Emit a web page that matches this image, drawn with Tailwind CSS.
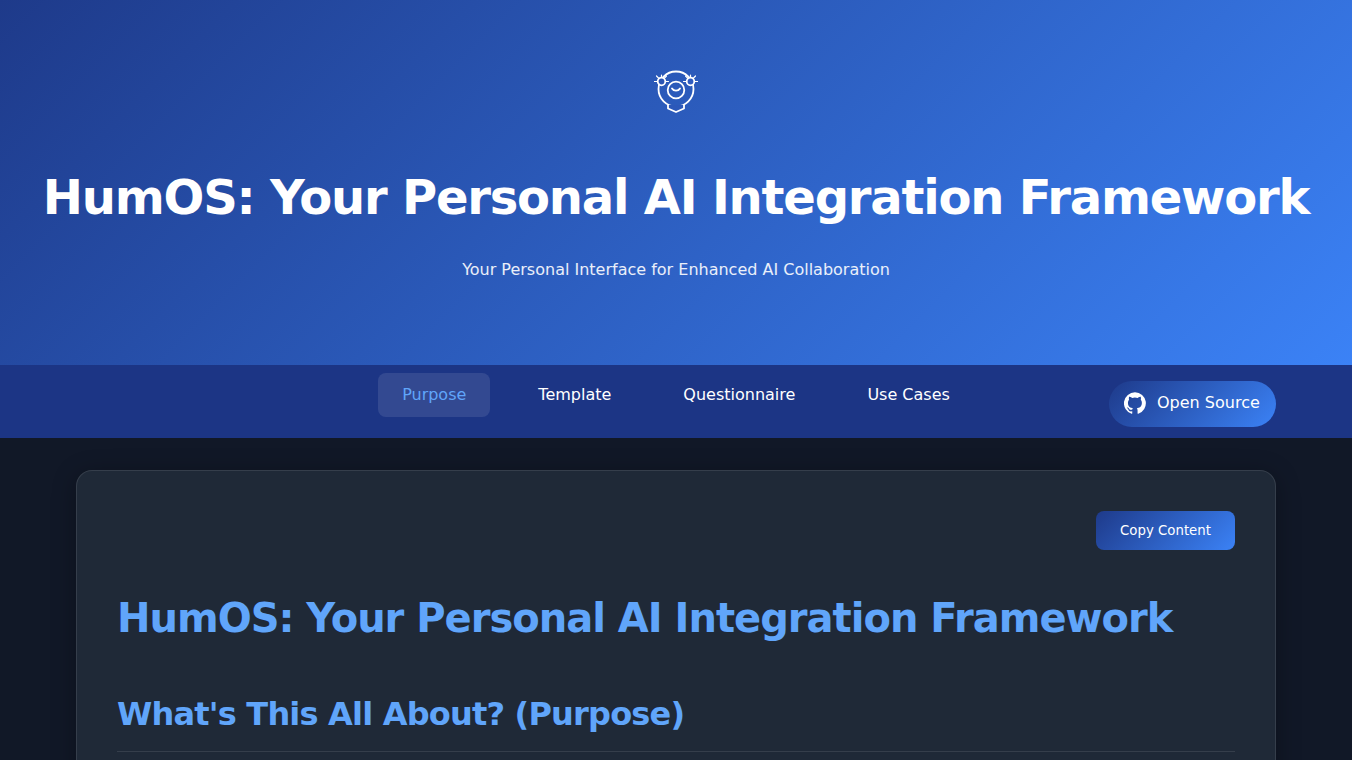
<!DOCTYPE html>
<html lang="en">
<head>
    <meta charset="UTF-8">
    <meta name="viewport" content="width=device-width, initial-scale=1.0">
    <title>HumOS: Your Personal AI Integration Framework</title>
    <script src="https://cdn.jsdelivr.net/npm/@tailwindcss/browser@4"></script>
</head>
<body class="bg-[#111827] text-white font-['DejaVu_Sans',sans-serif] h-[760px] overflow-hidden">

    <header class="h-[365px] bg-[linear-gradient(135deg,#1e3a8a,#3b82f6)] flex flex-col items-center pt-[69px]">
        <svg class="w-[44px] h-[44px] block" viewBox="0 0 44 44" fill="none" stroke="white" stroke-width="1.800" stroke-linecap="round" stroke-linejoin="round">
            <circle cx="22" cy="20" r="17.500"/>
            <circle cx="22" cy="21" r="8.300"/>
            <path d="M18 19.500c1.800 2.800 6.200 2.800 8 0"/>
            <circle cx="7.500" cy="12.500" r="3.800" fill="#2a54b3"/>
            <circle cx="36.500" cy="12.500" r="3.800" fill="#2e5bbf"/>
            <path d="M.5 12.500h3M11.500 12.500h3M7.500 6v2.500M2.500 7l2.500 2.500M12.500 7L10 9.500M29.500 12.500h3M40.500 12.500h3M36.500 6v2.500M31.500 7l2.500 2.500M41.500 7L39 9.500" stroke-width="1.200"/>
            <path d="M14 36v3.500l8 3.500 8-3.500V36" fill="#2c58b9"/>
        </svg>
        <h1 class="mt-[55px] text-[48px] leading-[58px] font-bold tracking-[-0.025em] whitespace-nowrap">HumOS: Your Personal AI Integration Framework</h1>
        <p class="mt-[32px] text-[16px] leading-[24px] text-white/90">Your Personal Interface for Enhanced AI Collaboration</p>
    </header>

    <nav class="h-[73px] bg-[#1c3585] grid grid-cols-[1fr_auto_1fr] px-[76px] pt-2">
        <div></div>
        <ul class="flex gap-6 text-[16px] leading-[44px]">
            <li class="px-6 h-11 rounded-lg bg-white/10 text-[#60a5fa]">Purpose</li>
            <li class="px-6 h-11">Template</li>
            <li class="px-6 h-11">Questionnaire</li>
            <li class="px-6 h-11">Use Cases</li>
        </ul>
        <div class="flex justify-end items-start">
            <a class="mt-2 h-[46px] w-[167px] rounded-[23px] bg-[linear-gradient(135deg,#1e3a8a,#3b82f6)] flex items-center gap-3 pl-4 pb-[2px] text-[16px]">
                <svg class="w-5 h-5 scale-110" viewBox="0 0 24 24" fill="white"><path d="M12 .3a12 12 0 0 0-3.800 23.400c.6.1.8-.3.8-.6v-2c-3.300.7-4-1.600-4-1.600-.6-1.400-1.400-1.800-1.400-1.800-1.100-.7.1-.7.1-.7 1.200.1 1.800 1.200 1.800 1.200 1.100 1.800 2.800 1.300 3.500 1 .1-.8.400-1.300.8-1.600-2.700-.3-5.500-1.300-5.500-5.900 0-1.300.5-2.400 1.200-3.200-.1-.3-.5-1.500.1-3.200 0 0 1-.3 3.300 1.200a11.500 11.500 0 0 1 6 0c2.300-1.500 3.300-1.200 3.300-1.200.6 1.700.2 2.900.1 3.200.8.800 1.200 1.900 1.200 3.200 0 4.600-2.800 5.600-5.500 5.900.4.400.8 1.100.8 2.200v3.300c0 .3.2.7.8.6A12 12 0 0 0 12 .3"/></svg>
                <span>Open Source</span>
            </a>
        </div>
    </nav>

    <main class="px-[76px] pt-8">
        <section class="h-[600px] rounded-2xl bg-[#1f2937] border border-white/10 shadow-[0_4px_24px_rgba(0,0,0,0.3)] px-10 pt-10">
            <div class="flex justify-end">
                <button class="w-[139px] h-[39px] rounded-lg bg-[linear-gradient(135deg,#1e3a8a,#3b82f6)] text-[13.300px]">Copy Content</button>
            </div>
            <h1 class="mt-[44px] text-[40px] leading-[48px] font-bold tracking-[-0.025em] text-[#60a5fa]">HumOS: Your Personal AI Integration Framework</h1>
            <h2 class="mt-[52px] pb-[17px] text-[32px] leading-[40px] font-bold tracking-[-0.025em] text-[#60a5fa] border-b border-white/10">What's This All About? (Purpose)</h2>
        </section>
    </main>

</body>
</html>
